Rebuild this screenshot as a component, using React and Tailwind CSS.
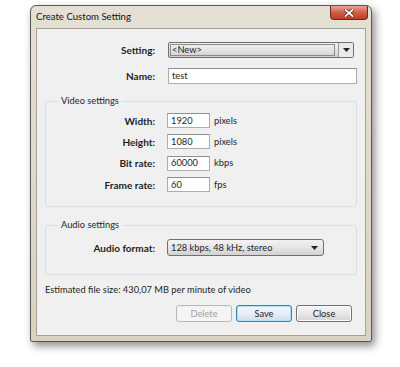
import React from "react";

const Arrow = () => (
  <svg width="7" height="4" viewBox="0 0 7 4">
    <path d="M0 0h7L3.5 4z" fill="#222" />
  </svg>
);

const Field = ({ label, value, unit }) => (
  <div className="flex h-[15px] items-center">
    <div className="w-[109px] text-right text-[10px] font-bold">{label}</div>
    <div className="ml-[12px] flex h-[15px] w-[43px] items-center border border-[#abadb3] border-t-[#8e8f8f] bg-white pl-[3px]">
      {value}
    </div>
    <div className="ml-[4px]">{unit}</div>
  </div>
);

const Btn = ({ children, primary, disabled }) => (
  <button
    className={
      disabled
        ? "h-[17px] w-[56px] rounded-[3px] border border-[#b5b8ba] bg-[#f4f4f4] text-[#a3a3a3]"
        : primary
        ? "h-[17px] w-[56px] rounded-[3px] border border-[#3c7fb1] bg-gradient-to-b from-[#f3f8fb] via-[#e6eff5] to-[#cfdee9] text-[#222] shadow-[inset_0_0_0_1px_#aee3f9]"
        : "h-[17px] w-[56px] rounded-[3px] border border-[#707070] bg-gradient-to-b from-[#f4f4f4] via-[#e9e9e9] to-[#d3d3d3] text-[#222] shadow-[inset_0_0_0_1px_#fcfcfc]"
    }
  >
    {children}
  </button>
);

export default function App() {
  return (
    <div
      className="h-[367px] w-[400px] overflow-hidden bg-white pt-[5px] pl-[30px] text-[9.3px] leading-[12px] text-[#1e1e1e]"
      style={{ fontFamily: 'Lato, "Noto Sans", sans-serif' }}
    >
      <div className="flex h-[337px] w-[342px] flex-col rounded-t-[6px] rounded-b-[2px] border border-[#5a5850] bg-gradient-to-b from-[#e4e1d4] to-[#d7d3c3] shadow-[3px_4px_8px_rgba(0,0,0,0.45)]">
        <div className="flex h-[22px] justify-between pl-[5px] pr-[3px]">
          <div className="mt-[5px] text-[9.6px] text-[#111]">Create Custom Setting</div>
          <div className="flex h-[14px] w-[38px] items-center justify-center rounded-b-[4px] border border-t-0 border-[#6b2a20] bg-gradient-to-b from-[#e9a393] via-[#d25e48] to-[#c13b25]">
            <svg width="10" height="8" viewBox="0 0 10 8">
              <path d="M1.5 1l7 6M8.5 1l-7 6" stroke="#5a1d14" strokeWidth="3.2" strokeLinecap="square" />
              <path d="M1.5 1l7 6M8.5 1l-7 6" stroke="#fff" strokeWidth="1.8" strokeLinecap="square" />
            </svg>
          </div>
        </div>
        <div className="mx-[5px] h-[308px] border border-[#a6a392] bg-[#f0f0f0]">
          <div className="mt-[13px] flex h-[16px] items-center">
            <div className="w-[118px] text-right text-[10px] font-bold">Setting:</div>
            <div className="ml-[13px] flex h-[16px] w-[186px] items-center rounded-[2px] border border-[#707070] bg-gradient-to-b from-[#f2f2f2] via-[#e4e4e4] to-[#d0d0d0]">
              <div className="ml-[1px] flex h-[12px] flex-1 items-center border border-[#8a8a8a] px-[1px]">&lt;New&gt;</div>
              <div className="ml-[3px] flex h-full w-[15px] items-center justify-center border-l border-[#9a9a9a] bg-[#eaeaea]">
                <Arrow />
              </div>
            </div>
          </div>
          <div className="mt-[10px] flex h-[16px] items-center">
            <div className="w-[118px] text-right text-[10px] font-bold">Name:</div>
            <div className="ml-[13px] flex h-[16px] w-[189px] items-center border border-[#abadb3] border-t-[#8e8f8f] bg-white pl-[3px]">
              test
            </div>
          </div>

          <fieldset className="ml-[8px] mt-[11px] w-[312px] rounded-[3px] border border-[#d5dfe5] pt-[6px] pb-[14px]">
            <legend className="ml-[12px] px-[3px]">Video settings</legend>
            <div className="flex flex-col gap-[6.4px]">
              <Field label="Width:" value="1920" unit="pixels" />
              <Field label="Height:" value="1080" unit="pixels" />
              <Field label="Bit rate:" value="60000" unit="kbps" />
              <Field label="Frame rate:" value="60" unit="fps" />
            </div>
          </fieldset>

          <fieldset className="ml-[8px] mt-[12px] w-[312px] rounded-[3px] border border-[#d5dfe5] pt-[8px] pb-[18px]">
            <legend className="ml-[12px] px-[3px]">Audio settings</legend>
            <div className="flex h-[17px] items-center">
              <div className="w-[109px] text-right text-[10px] font-bold">Audio format:</div>
              <div className="ml-[12px] flex h-[17px] w-[157px] items-center justify-between rounded-[3px] border border-[#707070] bg-gradient-to-b from-[#f2f2f2] via-[#e6e6e6] to-[#d1d1d1] pl-[3px] pr-[5px]">
                <span>128 kbps, 48 kHz, stereo</span>
                <Arrow />
              </div>
            </div>
          </fieldset>

          <div className="ml-[8px] mt-[9px]">Estimated file size: 430,07 MB per minute of video</div>

          <div className="mt-[9px] flex justify-end gap-[4px] pr-[13px]">
            <Btn disabled>Delete</Btn>
            <Btn primary>Save</Btn>
            <Btn>Close</Btn>
          </div>
        </div>
      </div>
    </div>
  );
}
